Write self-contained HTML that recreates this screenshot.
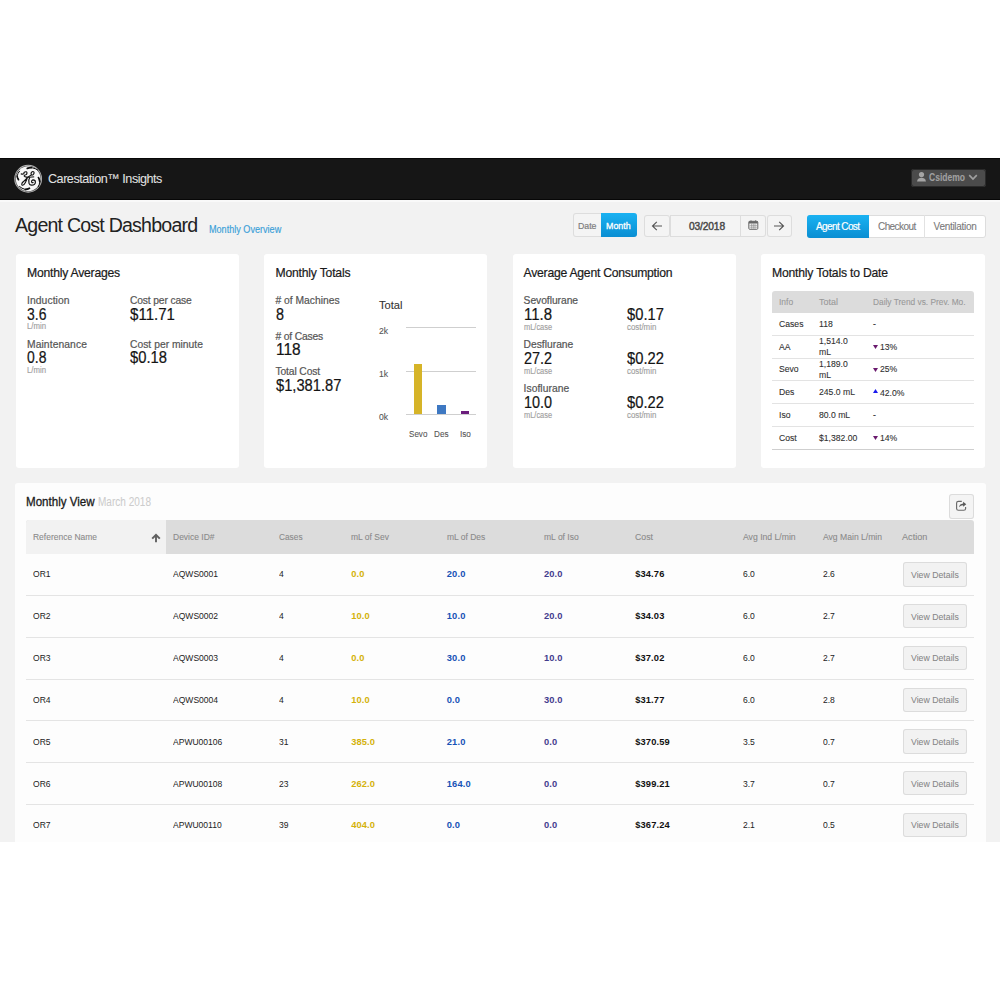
<!DOCTYPE html>
<html><head><meta charset="utf-8"><style>
html,body{margin:0;padding:0;}
body{width:1000px;height:1000px;position:relative;overflow:hidden;background:#ffffff;font-family:"Liberation Sans",sans-serif;}
.a{position:absolute;}
.t{position:absolute;white-space:nowrap;transform-origin:0 0;}
</style></head><body>
<div class="a" style="left:0.00px;top:158.00px;width:1000.00px;height:42.00px;background:#161616;"></div>
<div class="a" style="left:0.00px;top:158.00px;width:1000.00px;height:1.00px;background:#080808;"></div>
<div class="a" style="left:0.00px;top:199.00px;width:1000.00px;height:1.00px;background:#070707;"></div>
<div class="a" style="left:0.00px;top:200.00px;width:1000.00px;height:642.00px;background:#f2f2f2;"></div>
<div class="a" style="left:0.00px;top:200.00px;width:1000.00px;height:2.00px;background:#f9f9f9;"></div>
<svg class="a" style="left:12px;top:163px;width:34px;height:32px" viewBox="0 0 34 32">
<circle cx="16.15" cy="15.75" r="13.9" fill="#b8b8b8"/>
<circle cx="16.15" cy="15.75" r="13.0" fill="#4a4a4a"/>
<circle cx="16.15" cy="15.75" r="12.4" fill="#f8f8f8"/>
<g stroke="#111" fill="none" stroke-linecap="round">
<path d="M15.3 5.4 Q20.4 3.4 25.9 7.1" stroke-width="1.0"/>
<path d="M15.3 5.4 Q17.5 4.6 19.5 4.5" stroke-width="1.7"/>
<path d="M26.5 14.6 Q29.2 19 26.2 23.8" stroke-width="1.0"/>
<path d="M26.5 14.6 Q27.6 16.6 27.7 18.5" stroke-width="1.7"/>
<path d="M17.5 25.3 Q12.9 28.2 7.5 23.5" stroke-width="1.0"/>
<path d="M17.5 25.3 Q15.4 26.5 13.3 26.6" stroke-width="1.7"/>
<path d="M6.5 16.7 Q3.4 12.9 7.5 8.2" stroke-width="1.0"/>
<path d="M6.5 16.7 Q5.3 14.9 5.1 13" stroke-width="1.7"/>
<path d="M9.2 10.9 C10.5 11.4 11.3 11.2 11.9 10.6 C11.5 9.4 12.6 8.6 14.3 8.8 C15.4 9.3 15.1 11.3 13.8 11.7 C12.6 12 11.8 12.6 12.4 13.4 C13 14.1 14.3 14.1 15.3 14.3" stroke-width="1.15"/>
<path d="M15.3 14.5 C14.6 16 12.6 17.6 11 19 C9.6 20.3 9.4 22 10.3 22.2 C11.5 22.5 12.6 21.2 13.4 19.6 C14.2 18 14.8 16.8 15.3 14.6" stroke-width="1.15"/>
<path d="M15.3 14.6 L19.4 11.9 C18.6 10.6 19.2 8.7 20.9 8.5 C22.5 8.5 22.5 10.6 21 11.7 C20.4 12.1 19.8 12.2 19.4 11.9" stroke-width="1.15"/>
<path d="M15.8 14.3 L21.8 13.9" stroke-width="1.0"/>
<path d="M17.7 14.6 C16.8 15.8 16.6 18.4 17 20.2 C17.5 21.6 18.6 22.2 19.8 22.1 C21.6 22 23.3 20.8 23.4 19.2 C23.4 17.8 22.4 16.9 21.2 16.9 C20 17 19.4 17.9 19.6 18.8 C19.8 19.6 20.6 19.9 21.1 19.6" stroke-width="1.15"/>
</g></svg>
<div class="t" style="left:48.00px;top:171px;font-size:12.6px;line-height:16px;color:#e2e2e2;letter-spacing:-0.474px;-webkit-text-stroke-width:0.05px;">Carestation™ Insights</div>
<div class="a" style="left:911.00px;top:168.50px;width:74.50px;height:18.50px;background:#4b4b4b;border-radius:3px;box-shadow:inset 0 0 0 1px #2a2a2a;"></div>
<svg class="a" style="left:916px;top:171px;width:12px;height:12px" viewBox="0 0 12 12">
<circle cx="5.5" cy="3.6" r="2.6" fill="#a5a5a5"/><path d="M1 10.5 C1.5 7.5 3.5 6.8 5.5 6.8 C7.5 6.8 9.5 7.5 10 10.5 Z" fill="#a5a5a5"/></svg>
<div class="t" style="left:929.00px;top:172px;font-size:10px;line-height:12px;color:#a0a0a0;font-weight:700;transform:scaleX(0.8524);-webkit-text-stroke-width:0.1px;">Csidemo</div>
<svg class="a" style="left:968px;top:173px;width:10px;height:8px" viewBox="0 0 10 8">
<path d="M1.2 2.2 L5 6 L8.8 2.2" stroke="#a0a0a0" stroke-width="1.7" fill="none"/></svg>
<div class="t" style="left:15.00px;top:213px;font-size:19.6px;line-height:24px;color:#222222;letter-spacing:-0.795px;">Agent Cost Dashboard</div>
<div class="t" style="left:208.80px;top:224px;font-size:10px;line-height:12px;color:#3a9fd8;transform:scaleX(0.9085);-webkit-text-stroke-width:0.15px;">Monthly Overview</div>
<div class="a" style="left:572.75px;top:213.30px;width:64.05px;height:24.20px;background:#f4f4f4;border-radius:3px;box-shadow:inset 0 0 0 1px #dddddd;"></div>
<div class="a" style="left:600.80px;top:213.30px;width:36.00px;height:24.20px;background:linear-gradient(#1ab2f2,#0a8ed2);border-radius:0 3px 3px 0;"></div>
<div class="t" style="left:577.70px;top:220px;font-size:9.8px;line-height:12px;color:#7c7c7c;transform:scaleX(0.8937);-webkit-text-stroke-width:0.2px;">Date</div>
<div class="t" style="left:606.30px;top:220px;font-size:9.8px;line-height:12px;color:#ffffff;transform:scaleX(0.9068);-webkit-text-stroke-width:0.3px;">Month</div>
<div class="a" style="left:644.30px;top:215.30px;width:25.70px;height:22.00px;background:#f4f4f4;border-radius:3px;box-shadow:inset 0 0 0 1px #dddddd;"></div>
<svg class="a" style="left:651px;top:220px;width:12px;height:12px" viewBox="0 0 12 12">
<path d="M11 6 H1.5 M5.8 1.8 L1.5 6 L5.8 10.2" stroke="#555" stroke-width="1.15" fill="none"/></svg>
<div class="a" style="left:670.00px;top:215.30px;width:70.50px;height:22.00px;background:#f4f4f4;box-shadow:inset 0 0 0 1px #dddddd;"></div>
<div class="t" style="left:688.90px;top:220px;font-size:10.2px;line-height:13px;color:#4a4a4a;letter-spacing:-0.110px;-webkit-text-stroke-width:0.45px;">03/2018</div>
<div class="a" style="left:740.00px;top:215.30px;width:25.50px;height:22.00px;background:#f4f4f4;border-radius:0 3px 3px 0;box-shadow:inset 0 0 0 1px #dddddd;"></div>
<svg class="a" style="left:748px;top:219.5px;width:11px;height:10px" viewBox="0 0 11 10">
<rect x="0.8" y="1.3" width="9" height="8" rx="1" fill="none" stroke="#666" stroke-width="1"/><rect x="0.8" y="1.3" width="9" height="2.2" fill="#666"/>
<path d="M3 0.3 V2 M7.6 0.3 V2" stroke="#666" stroke-width="0.9"/>
<path d="M1.5 5.4 H9 M1.5 7.2 H9 M3.6 3.5 V8.8 M5.3 3.5 V8.8 M7 3.5 V8.8" stroke="#888" stroke-width="0.6"/></svg>
<div class="a" style="left:767.00px;top:215.30px;width:24.60px;height:22.00px;background:#f4f4f4;border-radius:3px;box-shadow:inset 0 0 0 1px #dddddd;"></div>
<svg class="a" style="left:773px;top:220px;width:12px;height:12px" viewBox="0 0 12 12">
<path d="M1 6 H10.5 M6.2 1.8 L10.5 6 L6.2 10.2" stroke="#555" stroke-width="1.15" fill="none"/></svg>
<div class="a" style="left:806.60px;top:215.00px;width:179.40px;height:23.00px;background:#ffffff;border-radius:3px;box-shadow:inset 0 0 0 1px #dddddd;"></div>
<div class="a" style="left:806.60px;top:215.00px;width:62.00px;height:23.00px;background:linear-gradient(#1ab2f2,#0a8ed2);border-radius:3px 0 0 3px;"></div>
<div class="a" style="left:924.00px;top:215.00px;width:1.00px;height:23.00px;background:#e2e2e2;"></div>
<div class="t" style="left:816.00px;top:221px;font-size:10px;line-height:12px;color:#ffffff;letter-spacing:-0.607px;-webkit-text-stroke-width:0.2px;">Agent Cost</div>
<div class="t" style="left:878.00px;top:221px;font-size:10px;line-height:12px;color:#7a7a7a;letter-spacing:-0.581px;-webkit-text-stroke-width:0.1px;">Checkout</div>
<div class="t" style="left:933.60px;top:221px;font-size:10px;line-height:12px;color:#7a7a7a;letter-spacing:-0.304px;-webkit-text-stroke-width:0.1px;">Ventilation</div>
<div class="a" style="left:15.60px;top:253.80px;width:223.40px;height:214.20px;background:#ffffff;border-radius:3px;"></div>
<div class="a" style="left:263.75px;top:253.80px;width:223.25px;height:214.20px;background:#ffffff;border-radius:3px;"></div>
<div class="a" style="left:512.50px;top:253.80px;width:223.50px;height:214.20px;background:#ffffff;border-radius:3px;"></div>
<div class="a" style="left:761.00px;top:253.80px;width:223.50px;height:214.20px;background:#ffffff;border-radius:3px;"></div>
<div class="t" style="left:27.00px;top:266px;font-size:12.2px;line-height:15px;color:#1a1a1a;letter-spacing:-0.235px;-webkit-text-stroke-width:0.2px;">Monthly Averages</div>
<div class="t" style="left:27.00px;top:294px;font-size:10.3px;line-height:13px;color:#555555;letter-spacing:0.088px;-webkit-text-stroke-width:0.2px;">Induction</div>
<div class="t" style="left:27.00px;top:304px;font-size:16.3px;line-height:20px;color:#141414;transform:scaleX(0.8562);-webkit-text-stroke-width:0.2px;">3.6</div>
<div class="t" style="left:27.00px;top:321px;font-size:8.3px;line-height:10px;color:#a0a0a0;transform:scaleX(0.9361);-webkit-text-stroke-width:0.15px;">L/min</div>
<div class="t" style="left:27.00px;top:338px;font-size:10.3px;line-height:13px;color:#555555;letter-spacing:0.093px;-webkit-text-stroke-width:0.2px;">Maintenance</div>
<div class="t" style="left:27.00px;top:347px;font-size:16.3px;line-height:20px;color:#141414;transform:scaleX(0.8562);-webkit-text-stroke-width:0.2px;">0.8</div>
<div class="t" style="left:27.00px;top:365px;font-size:8.3px;line-height:10px;color:#a0a0a0;transform:scaleX(0.9361);-webkit-text-stroke-width:0.15px;">L/min</div>
<div class="t" style="left:130.00px;top:294px;font-size:10.3px;line-height:13px;color:#555555;letter-spacing:-0.150px;-webkit-text-stroke-width:0.2px;">Cost per case</div>
<div class="t" style="left:130.00px;top:304px;font-size:16.3px;line-height:20px;color:#141414;transform:scaleX(0.9250);-webkit-text-stroke-width:0.2px;">$11.71</div>
<div class="t" style="left:130.00px;top:338px;font-size:10.3px;line-height:13px;color:#555555;letter-spacing:0.020px;-webkit-text-stroke-width:0.2px;">Cost per minute</div>
<div class="t" style="left:130.00px;top:347px;font-size:16.3px;line-height:20px;color:#141414;transform:scaleX(0.9071);-webkit-text-stroke-width:0.2px;">$0.18</div>
<div class="t" style="left:275.50px;top:266px;font-size:12.2px;line-height:15px;color:#1a1a1a;letter-spacing:-0.204px;-webkit-text-stroke-width:0.2px;">Monthly Totals</div>
<div class="t" style="left:275.50px;top:294px;font-size:10.3px;line-height:13px;color:#555555;-webkit-text-stroke-width:0.2px;"># of Machines</div>
<div class="t" style="left:275.50px;top:304px;font-size:16.3px;line-height:20px;color:#141414;transform:scaleX(0.8825);-webkit-text-stroke-width:0.2px;">8</div>
<div class="t" style="left:275.50px;top:330px;font-size:10.3px;line-height:13px;color:#555555;letter-spacing:-0.174px;-webkit-text-stroke-width:0.2px;"># of Cases</div>
<div class="t" style="left:275.50px;top:339px;font-size:16.3px;line-height:20px;color:#141414;transform:scaleX(0.9505);-webkit-text-stroke-width:0.2px;">118</div>
<div class="t" style="left:275.50px;top:365px;font-size:10.3px;line-height:13px;color:#555555;letter-spacing:-0.130px;-webkit-text-stroke-width:0.2px;">Total Cost</div>
<div class="t" style="left:275.50px;top:375px;font-size:16.3px;line-height:20px;color:#141414;transform:scaleX(0.9033);-webkit-text-stroke-width:0.2px;">$1,381.87</div>
<div class="t" style="left:378.90px;top:298px;font-size:11.5px;line-height:14px;color:#333333;transform:scaleX(0.9674);-webkit-text-stroke-width:0.1px;">Total</div>
<div class="a" style="left:406.40px;top:326.80px;width:69.90px;height:1.00px;background:#cfcfcf;"></div>
<div class="a" style="left:406.40px;top:370.60px;width:69.90px;height:1.00px;background:#cfcfcf;"></div>
<div class="a" style="left:406.40px;top:413.70px;width:69.90px;height:1.00px;background:#cfcfcf;"></div>
<div class="t" style="left:378.90px;top:326px;font-size:8.7px;line-height:11px;color:#555555;transform:scaleX(0.9903);-webkit-text-stroke-width:0.1px;">2k</div>
<div class="t" style="left:378.90px;top:369px;font-size:8.7px;line-height:11px;color:#555555;transform:scaleX(0.9903);-webkit-text-stroke-width:0.1px;">1k</div>
<div class="t" style="left:378.90px;top:412px;font-size:8.7px;line-height:11px;color:#555555;transform:scaleX(0.9903);-webkit-text-stroke-width:0.1px;">0k</div>
<div class="a" style="left:413.80px;top:363.60px;width:8.60px;height:50.40px;background:#d6b428;"></div>
<div class="a" style="left:437.30px;top:404.60px;width:8.60px;height:9.40px;background:#3e78c2;"></div>
<div class="a" style="left:460.80px;top:411.10px;width:8.50px;height:2.90px;background:#6b1d7c;"></div>
<div class="t" style="left:408.80px;top:428px;font-size:9.6px;line-height:12px;color:#555555;transform:scaleX(0.8409);-webkit-text-stroke-width:0.1px;">Sevo</div>
<div class="t" style="left:434.00px;top:428px;font-size:9.6px;line-height:12px;color:#555555;transform:scaleX(0.8493);-webkit-text-stroke-width:0.1px;">Des</div>
<div class="t" style="left:459.50px;top:428px;font-size:9.6px;line-height:12px;color:#555555;transform:scaleX(0.8511);-webkit-text-stroke-width:0.1px;">Iso</div>
<div class="t" style="left:523.60px;top:266px;font-size:12.2px;line-height:15px;color:#1a1a1a;letter-spacing:-0.252px;-webkit-text-stroke-width:0.2px;">Average Agent Consumption</div>
<div class="t" style="left:523.60px;top:294px;font-size:10.3px;line-height:13px;color:#555555;letter-spacing:-0.052px;-webkit-text-stroke-width:0.2px;">Sevoflurane</div>
<div class="t" style="left:523.60px;top:304px;font-size:16.3px;line-height:20px;color:#141414;transform:scaleX(0.9208);-webkit-text-stroke-width:0.2px;">11.8</div>
<div class="t" style="left:523.60px;top:322px;font-size:8.3px;line-height:10px;color:#a0a0a0;transform:scaleX(0.8958);-webkit-text-stroke-width:0.15px;">mL/case</div>
<div class="t" style="left:627.00px;top:304px;font-size:16.3px;line-height:20px;color:#141414;transform:scaleX(0.9046);-webkit-text-stroke-width:0.2px;">$0.17</div>
<div class="t" style="left:627.00px;top:322px;font-size:8.3px;line-height:10px;color:#a0a0a0;transform:scaleX(0.9481);-webkit-text-stroke-width:0.15px;">cost/min</div>
<div class="t" style="left:523.60px;top:338px;font-size:10.3px;line-height:13px;color:#555555;letter-spacing:-0.011px;-webkit-text-stroke-width:0.2px;">Desflurane</div>
<div class="t" style="left:523.60px;top:348px;font-size:16.3px;line-height:20px;color:#141414;transform:scaleX(0.8857);-webkit-text-stroke-width:0.2px;">27.2</div>
<div class="t" style="left:523.60px;top:366px;font-size:8.3px;line-height:10px;color:#a0a0a0;transform:scaleX(0.8958);-webkit-text-stroke-width:0.15px;">mL/case</div>
<div class="t" style="left:627.00px;top:348px;font-size:16.3px;line-height:20px;color:#141414;transform:scaleX(0.9046);-webkit-text-stroke-width:0.2px;">$0.22</div>
<div class="t" style="left:627.00px;top:366px;font-size:8.3px;line-height:10px;color:#a0a0a0;transform:scaleX(0.9481);-webkit-text-stroke-width:0.15px;">cost/min</div>
<div class="t" style="left:523.60px;top:382px;font-size:10.3px;line-height:13px;color:#555555;letter-spacing:0.037px;-webkit-text-stroke-width:0.2px;">Isoflurane</div>
<div class="t" style="left:523.60px;top:392px;font-size:16.3px;line-height:20px;color:#141414;transform:scaleX(0.8857);-webkit-text-stroke-width:0.2px;">10.0</div>
<div class="t" style="left:523.60px;top:410px;font-size:8.3px;line-height:10px;color:#a0a0a0;transform:scaleX(0.8958);-webkit-text-stroke-width:0.15px;">mL/case</div>
<div class="t" style="left:627.00px;top:392px;font-size:16.3px;line-height:20px;color:#141414;transform:scaleX(0.9046);-webkit-text-stroke-width:0.2px;">$0.22</div>
<div class="t" style="left:627.00px;top:410px;font-size:8.3px;line-height:10px;color:#a0a0a0;transform:scaleX(0.9481);-webkit-text-stroke-width:0.15px;">cost/min</div>
<div class="t" style="left:772.00px;top:266px;font-size:12.2px;line-height:15px;color:#1a1a1a;letter-spacing:-0.204px;-webkit-text-stroke-width:0.2px;">Monthly Totals to Date</div>
<div class="a" style="left:772.00px;top:291.00px;width:202.00px;height:21.70px;background:#dcdcdc;border-radius:3px 3px 0 0;"></div>
<div class="t" style="left:778.90px;top:296px;font-size:9.6px;line-height:12px;color:#999999;transform:scaleX(0.8806);-webkit-text-stroke-width:0.1px;">Info</div>
<div class="t" style="left:819.10px;top:296px;font-size:9.6px;line-height:12px;color:#999999;transform:scaleX(0.9320);-webkit-text-stroke-width:0.1px;">Total</div>
<div class="t" style="left:873.20px;top:296px;font-size:9.6px;line-height:12px;color:#999999;transform:scaleX(0.8693);-webkit-text-stroke-width:0.1px;">Daily Trend vs. Prev. Mo.</div>
<div class="a" style="left:772.00px;top:335.00px;width:202.00px;height:1.00px;background:#e3e3e3;"></div>
<div class="a" style="left:772.00px;top:358.00px;width:202.00px;height:1.00px;background:#e3e3e3;"></div>
<div class="a" style="left:772.00px;top:380.00px;width:202.00px;height:1.00px;background:#e3e3e3;"></div>
<div class="a" style="left:772.00px;top:403.00px;width:202.00px;height:1.00px;background:#e3e3e3;"></div>
<div class="a" style="left:772.00px;top:426.00px;width:202.00px;height:1.00px;background:#e3e3e3;"></div>
<div class="a" style="left:772.00px;top:449.00px;width:202.00px;height:1.00px;background:#cfcfcf;"></div>
<div class="t" style="left:778.90px;top:318px;font-size:9.4px;line-height:12px;color:#303030;transform:scaleX(0.9200);-webkit-text-stroke-width:0.1px;">Cases</div>
<div class="t" style="left:819.10px;top:318px;font-size:9.4px;line-height:12px;color:#303030;transform:scaleX(0.9200);-webkit-text-stroke-width:0.1px;">118</div>
<div class="t" style="left:873.20px;top:318px;font-size:9.4px;line-height:12px;color:#303030;transform:scaleX(0.9200);-webkit-text-stroke-width:0.1px;">-</div>
<div class="t" style="left:778.90px;top:341px;font-size:9.4px;line-height:12px;color:#303030;transform:scaleX(0.9200);-webkit-text-stroke-width:0.1px;">AA</div>
<div class="t" style="left:819.10px;top:335px;font-size:9.4px;line-height:12px;color:#303030;transform:scaleX(0.9200);-webkit-text-stroke-width:0.1px;">1,514.0</div>
<div class="t" style="left:819.10px;top:346px;font-size:9.4px;line-height:12px;color:#303030;transform:scaleX(0.9200);-webkit-text-stroke-width:0.1px;">mL</div>
<svg class="a" style="left:873px;top:345.00px;width:5px;height:4px" viewBox="0 0 5 4"><path d="M0 0 H5 L2.5 4Z" fill="#6a1a6e"/></svg>
<div class="t" style="left:879.60px;top:341px;font-size:9.4px;line-height:12px;color:#303030;transform:scaleX(0.9200);-webkit-text-stroke-width:0.1px;">13%</div>
<div class="t" style="left:778.90px;top:363px;font-size:9.4px;line-height:12px;color:#303030;transform:scaleX(0.9200);-webkit-text-stroke-width:0.1px;">Sevo</div>
<div class="t" style="left:819.10px;top:358px;font-size:9.4px;line-height:12px;color:#303030;transform:scaleX(0.9200);-webkit-text-stroke-width:0.1px;">1,189.0</div>
<div class="t" style="left:819.10px;top:369px;font-size:9.4px;line-height:12px;color:#303030;transform:scaleX(0.9200);-webkit-text-stroke-width:0.1px;">mL</div>
<svg class="a" style="left:873px;top:367.50px;width:5px;height:4px" viewBox="0 0 5 4"><path d="M0 0 H5 L2.5 4Z" fill="#6a1a6e"/></svg>
<div class="t" style="left:879.60px;top:363px;font-size:9.4px;line-height:12px;color:#303030;transform:scaleX(0.9200);-webkit-text-stroke-width:0.1px;">25%</div>
<div class="t" style="left:778.90px;top:386px;font-size:9.4px;line-height:12px;color:#303030;transform:scaleX(0.9200);-webkit-text-stroke-width:0.1px;">Des</div>
<div class="t" style="left:819.10px;top:386px;font-size:9.4px;line-height:12px;color:#303030;transform:scaleX(0.9200);-webkit-text-stroke-width:0.1px;">245.0 mL</div>
<svg class="a" style="left:873px;top:389.00px;width:5px;height:4px" viewBox="0 0 5 4"><path d="M0 4 H5 L2.5 0Z" fill="#1a1aee"/></svg>
<div class="t" style="left:880.30px;top:387px;font-size:9.4px;line-height:12px;color:#303030;transform:scaleX(0.9200);-webkit-text-stroke-width:0.1px;">42.0%</div>
<div class="t" style="left:778.90px;top:409px;font-size:9.4px;line-height:12px;color:#303030;transform:scaleX(0.9200);-webkit-text-stroke-width:0.1px;">Iso</div>
<div class="t" style="left:819.10px;top:409px;font-size:9.4px;line-height:12px;color:#303030;transform:scaleX(0.9200);-webkit-text-stroke-width:0.1px;">80.0 mL</div>
<div class="t" style="left:873.20px;top:409px;font-size:9.4px;line-height:12px;color:#303030;transform:scaleX(0.9200);-webkit-text-stroke-width:0.1px;">-</div>
<div class="t" style="left:778.90px;top:432px;font-size:9.4px;line-height:12px;color:#303030;transform:scaleX(0.9200);-webkit-text-stroke-width:0.1px;">Cost</div>
<div class="t" style="left:819.10px;top:432px;font-size:9.4px;line-height:12px;color:#303030;transform:scaleX(0.9200);-webkit-text-stroke-width:0.1px;">$1,382.00</div>
<svg class="a" style="left:873px;top:436.00px;width:5px;height:4px" viewBox="0 0 5 4"><path d="M0 0 H5 L2.5 4Z" fill="#6a1a6e"/></svg>
<div class="t" style="left:879.60px;top:432px;font-size:9.4px;line-height:12px;color:#303030;transform:scaleX(0.9200);-webkit-text-stroke-width:0.1px;">14%</div>
<div class="a" style="left:15.00px;top:483.00px;width:970.50px;height:359.00px;background:#fdfdfd;border-radius:3px 3px 0 0;"></div>
<div class="t" style="left:26.40px;top:495px;font-size:12.5px;line-height:15px;color:#1a1a1a;transform:scaleX(0.9256);-webkit-text-stroke-width:0.3px;">Monthly View</div>
<div class="t" style="left:98.00px;top:495px;font-size:12.5px;line-height:15px;color:#cccccc;transform:scaleX(0.8029);-webkit-text-stroke-width:0.05px;">March 2018</div>
<div class="a" style="left:948.60px;top:494.00px;width:25.90px;height:24.60px;background:#f4f4f4;border-radius:3px;box-shadow:inset 0 0 0 1px #dcdcdc;"></div>
<svg class="a" style="left:955px;top:500px;width:12px;height:12px" viewBox="0 0 12 12">
<path d="M6.8 1.3 H3.4 Q1.6 1.3 1.6 3.1 V8.4 Q1.6 10.2 3.4 10.2 H8.8 Q10.6 10.2 10.6 8.4 V7" stroke="#6a6a6a" stroke-width="1.15" fill="none"/>
<path d="M4 7.2 Q4.6 3.9 8.1 3.5 V1.8 L11.3 4.3 L8.1 6.8 V5.2 Q5.6 5.2 4 7.2 Z" fill="#5a5a5a"/></svg>
<div class="a" style="left:26.00px;top:520.00px;width:948.30px;height:33.50px;background:#dcdcdc;border-radius:3px 3px 0 0;"></div>
<div class="a" style="left:26.00px;top:520.00px;width:140.00px;height:33.50px;background:#f2f2f2;border-radius:3px 0 0 0;"></div>
<div class="t" style="left:33.40px;top:531px;font-size:9.9px;line-height:12px;color:#8a8a8a;transform:scaleX(0.8579);-webkit-text-stroke-width:0.1px;">Reference Name</div>
<div class="t" style="left:173.20px;top:531px;font-size:9.9px;line-height:12px;color:#8a8a8a;transform:scaleX(0.8592);-webkit-text-stroke-width:0.1px;">Device ID#</div>
<div class="t" style="left:279.20px;top:531px;font-size:9.9px;line-height:12px;color:#8a8a8a;transform:scaleX(0.8410);-webkit-text-stroke-width:0.1px;">Cases</div>
<div class="t" style="left:351.20px;top:531px;font-size:9.9px;line-height:12px;color:#8a8a8a;transform:scaleX(0.8597);-webkit-text-stroke-width:0.1px;">mL of Sev</div>
<div class="t" style="left:446.80px;top:531px;font-size:9.9px;line-height:12px;color:#8a8a8a;transform:scaleX(0.8581);-webkit-text-stroke-width:0.1px;">mL of Des</div>
<div class="t" style="left:544.00px;top:531px;font-size:9.9px;line-height:12px;color:#8a8a8a;transform:scaleX(0.8625);-webkit-text-stroke-width:0.1px;">mL of Iso</div>
<div class="t" style="left:635.20px;top:531px;font-size:9.9px;line-height:12px;color:#8a8a8a;transform:scaleX(0.8843);-webkit-text-stroke-width:0.1px;">Cost</div>
<div class="t" style="left:743.20px;top:531px;font-size:9.9px;line-height:12px;color:#8a8a8a;transform:scaleX(0.8748);-webkit-text-stroke-width:0.1px;">Avg Ind L/min</div>
<div class="t" style="left:822.80px;top:531px;font-size:9.9px;line-height:12px;color:#8a8a8a;transform:scaleX(0.8699);-webkit-text-stroke-width:0.1px;">Avg Main L/min</div>
<div class="t" style="left:902.40px;top:531px;font-size:9.9px;line-height:12px;color:#8a8a8a;transform:scaleX(0.9231);-webkit-text-stroke-width:0.1px;">Action</div>
<svg class="a" style="left:151px;top:532.5px;width:10px;height:10px" viewBox="0 0 10 10">
<path d="M5 9.3 V3" stroke="#606060" stroke-width="1.9" fill="none"/><path d="M1.2 5.6 L5 1.8 L8.8 5.6" stroke="#606060" stroke-width="2" fill="none"/></svg>
<div class="a" style="left:26.00px;top:595.00px;width:948.20px;height:1.00px;background:#e4e4e4;"></div>
<div class="t" style="left:33.40px;top:568px;font-size:9.4px;line-height:12px;color:#222222;transform:scaleX(0.9100);">OR1</div>
<div class="t" style="left:173.20px;top:568px;font-size:9.4px;line-height:12px;color:#222222;transform:scaleX(0.9100);">AQWS0001</div>
<div class="t" style="left:279.20px;top:568px;font-size:9.4px;line-height:12px;color:#222222;transform:scaleX(0.9100);">4</div>
<div class="t" style="left:351.20px;top:568px;font-size:9.3px;line-height:12px;color:#d4b20a;font-weight:700;letter-spacing:0.129px;">0.0</div>
<div class="t" style="left:446.80px;top:568px;font-size:9.3px;line-height:12px;color:#1752b6;font-weight:700;letter-spacing:0.136px;">20.0</div>
<div class="t" style="left:544.00px;top:568px;font-size:9.3px;line-height:12px;color:#443c8e;font-weight:700;letter-spacing:0.136px;">20.0</div>
<div class="t" style="left:635.20px;top:568px;font-size:9.3px;line-height:12px;color:#111111;font-weight:700;letter-spacing:0.142px;">$34.76</div>
<div class="t" style="left:743.20px;top:568px;font-size:9.4px;line-height:12px;color:#222222;transform:scaleX(0.9100);">6.0</div>
<div class="t" style="left:822.80px;top:568px;font-size:9.4px;line-height:12px;color:#222222;transform:scaleX(0.9100);">2.6</div>
<div class="a" style="left:903.20px;top:562.40px;width:63.50px;height:24.20px;background:#f2f2f2;border-radius:3px;box-shadow:inset 0 0 0 1px #dcdcdc;"></div>
<div class="t" style="left:911.00px;top:569px;font-size:9.9px;line-height:12px;color:#858585;transform:scaleX(0.8841);-webkit-text-stroke-width:0.05px;">View Details</div>
<div class="a" style="left:26.00px;top:637.00px;width:948.20px;height:1.00px;background:#e4e4e4;"></div>
<div class="t" style="left:33.40px;top:610px;font-size:9.4px;line-height:12px;color:#222222;transform:scaleX(0.9100);">OR2</div>
<div class="t" style="left:173.20px;top:610px;font-size:9.4px;line-height:12px;color:#222222;transform:scaleX(0.9100);">AQWS0002</div>
<div class="t" style="left:279.20px;top:610px;font-size:9.4px;line-height:12px;color:#222222;transform:scaleX(0.9100);">4</div>
<div class="t" style="left:351.20px;top:610px;font-size:9.3px;line-height:12px;color:#d4b20a;font-weight:700;letter-spacing:0.136px;">10.0</div>
<div class="t" style="left:446.80px;top:610px;font-size:9.3px;line-height:12px;color:#1752b6;font-weight:700;letter-spacing:0.136px;">10.0</div>
<div class="t" style="left:544.00px;top:610px;font-size:9.3px;line-height:12px;color:#443c8e;font-weight:700;letter-spacing:0.136px;">20.0</div>
<div class="t" style="left:635.20px;top:610px;font-size:9.3px;line-height:12px;color:#111111;font-weight:700;letter-spacing:0.142px;">$34.03</div>
<div class="t" style="left:743.20px;top:610px;font-size:9.4px;line-height:12px;color:#222222;transform:scaleX(0.9100);">6.0</div>
<div class="t" style="left:822.80px;top:610px;font-size:9.4px;line-height:12px;color:#222222;transform:scaleX(0.9100);">2.7</div>
<div class="a" style="left:903.20px;top:604.15px;width:63.50px;height:24.20px;background:#f2f2f2;border-radius:3px;box-shadow:inset 0 0 0 1px #dcdcdc;"></div>
<div class="t" style="left:911.00px;top:611px;font-size:9.9px;line-height:12px;color:#858585;transform:scaleX(0.8841);-webkit-text-stroke-width:0.05px;">View Details</div>
<div class="a" style="left:26.00px;top:679.00px;width:948.20px;height:1.00px;background:#e4e4e4;"></div>
<div class="t" style="left:33.40px;top:652px;font-size:9.4px;line-height:12px;color:#222222;transform:scaleX(0.9100);">OR3</div>
<div class="t" style="left:173.20px;top:652px;font-size:9.4px;line-height:12px;color:#222222;transform:scaleX(0.9100);">AQWS0003</div>
<div class="t" style="left:279.20px;top:652px;font-size:9.4px;line-height:12px;color:#222222;transform:scaleX(0.9100);">4</div>
<div class="t" style="left:351.20px;top:652px;font-size:9.3px;line-height:12px;color:#d4b20a;font-weight:700;letter-spacing:0.129px;">0.0</div>
<div class="t" style="left:446.80px;top:652px;font-size:9.3px;line-height:12px;color:#1752b6;font-weight:700;letter-spacing:0.136px;">30.0</div>
<div class="t" style="left:544.00px;top:652px;font-size:9.3px;line-height:12px;color:#443c8e;font-weight:700;letter-spacing:0.136px;">10.0</div>
<div class="t" style="left:635.20px;top:652px;font-size:9.3px;line-height:12px;color:#111111;font-weight:700;letter-spacing:0.142px;">$37.02</div>
<div class="t" style="left:743.20px;top:652px;font-size:9.4px;line-height:12px;color:#222222;transform:scaleX(0.9100);">6.0</div>
<div class="t" style="left:822.80px;top:652px;font-size:9.4px;line-height:12px;color:#222222;transform:scaleX(0.9100);">2.7</div>
<div class="a" style="left:903.20px;top:645.90px;width:63.50px;height:24.20px;background:#f2f2f2;border-radius:3px;box-shadow:inset 0 0 0 1px #dcdcdc;"></div>
<div class="t" style="left:911.00px;top:652px;font-size:9.9px;line-height:12px;color:#858585;transform:scaleX(0.8841);-webkit-text-stroke-width:0.05px;">View Details</div>
<div class="a" style="left:26.00px;top:720.00px;width:948.20px;height:1.00px;background:#e4e4e4;"></div>
<div class="t" style="left:33.40px;top:694px;font-size:9.4px;line-height:12px;color:#222222;transform:scaleX(0.9100);">OR4</div>
<div class="t" style="left:173.20px;top:694px;font-size:9.4px;line-height:12px;color:#222222;transform:scaleX(0.9100);">AQWS0004</div>
<div class="t" style="left:279.20px;top:694px;font-size:9.4px;line-height:12px;color:#222222;transform:scaleX(0.9100);">4</div>
<div class="t" style="left:351.20px;top:694px;font-size:9.3px;line-height:12px;color:#d4b20a;font-weight:700;letter-spacing:0.136px;">10.0</div>
<div class="t" style="left:446.80px;top:694px;font-size:9.3px;line-height:12px;color:#1752b6;font-weight:700;letter-spacing:0.129px;">0.0</div>
<div class="t" style="left:544.00px;top:694px;font-size:9.3px;line-height:12px;color:#443c8e;font-weight:700;letter-spacing:0.136px;">30.0</div>
<div class="t" style="left:635.20px;top:694px;font-size:9.3px;line-height:12px;color:#111111;font-weight:700;letter-spacing:0.142px;">$31.77</div>
<div class="t" style="left:743.20px;top:694px;font-size:9.4px;line-height:12px;color:#222222;transform:scaleX(0.9100);">6.0</div>
<div class="t" style="left:822.80px;top:694px;font-size:9.4px;line-height:12px;color:#222222;transform:scaleX(0.9100);">2.8</div>
<div class="a" style="left:903.20px;top:687.65px;width:63.50px;height:24.20px;background:#f2f2f2;border-radius:3px;box-shadow:inset 0 0 0 1px #dcdcdc;"></div>
<div class="t" style="left:911.00px;top:694px;font-size:9.9px;line-height:12px;color:#858585;transform:scaleX(0.8841);-webkit-text-stroke-width:0.05px;">View Details</div>
<div class="a" style="left:26.00px;top:762.00px;width:948.20px;height:1.00px;background:#e4e4e4;"></div>
<div class="t" style="left:33.40px;top:736px;font-size:9.4px;line-height:12px;color:#222222;transform:scaleX(0.9100);">OR5</div>
<div class="t" style="left:173.20px;top:736px;font-size:9.4px;line-height:12px;color:#222222;transform:scaleX(0.9100);">APWU00106</div>
<div class="t" style="left:279.20px;top:736px;font-size:9.4px;line-height:12px;color:#222222;transform:scaleX(0.9100);">31</div>
<div class="t" style="left:351.20px;top:736px;font-size:9.3px;line-height:12px;color:#d4b20a;font-weight:700;letter-spacing:0.140px;">385.0</div>
<div class="t" style="left:446.80px;top:736px;font-size:9.3px;line-height:12px;color:#1752b6;font-weight:700;letter-spacing:0.136px;">21.0</div>
<div class="t" style="left:544.00px;top:736px;font-size:9.3px;line-height:12px;color:#443c8e;font-weight:700;letter-spacing:0.129px;">0.0</div>
<div class="t" style="left:635.20px;top:736px;font-size:9.3px;line-height:12px;color:#111111;font-weight:700;letter-spacing:0.144px;">$370.59</div>
<div class="t" style="left:743.20px;top:736px;font-size:9.4px;line-height:12px;color:#222222;transform:scaleX(0.9100);">3.5</div>
<div class="t" style="left:822.80px;top:736px;font-size:9.4px;line-height:12px;color:#222222;transform:scaleX(0.9100);">0.7</div>
<div class="a" style="left:903.20px;top:729.40px;width:63.50px;height:24.20px;background:#f2f2f2;border-radius:3px;box-shadow:inset 0 0 0 1px #dcdcdc;"></div>
<div class="t" style="left:911.00px;top:736px;font-size:9.9px;line-height:12px;color:#858585;transform:scaleX(0.8841);-webkit-text-stroke-width:0.05px;">View Details</div>
<div class="a" style="left:26.00px;top:804.00px;width:948.20px;height:1.00px;background:#e4e4e4;"></div>
<div class="t" style="left:33.40px;top:778px;font-size:9.4px;line-height:12px;color:#222222;transform:scaleX(0.9100);">OR6</div>
<div class="t" style="left:173.20px;top:778px;font-size:9.4px;line-height:12px;color:#222222;transform:scaleX(0.9100);">APWU00108</div>
<div class="t" style="left:279.20px;top:778px;font-size:9.4px;line-height:12px;color:#222222;transform:scaleX(0.9100);">23</div>
<div class="t" style="left:351.20px;top:778px;font-size:9.3px;line-height:12px;color:#d4b20a;font-weight:700;letter-spacing:0.140px;">262.0</div>
<div class="t" style="left:446.80px;top:778px;font-size:9.3px;line-height:12px;color:#1752b6;font-weight:700;letter-spacing:0.140px;">164.0</div>
<div class="t" style="left:544.00px;top:778px;font-size:9.3px;line-height:12px;color:#443c8e;font-weight:700;letter-spacing:0.129px;">0.0</div>
<div class="t" style="left:635.20px;top:778px;font-size:9.3px;line-height:12px;color:#111111;font-weight:700;letter-spacing:0.144px;">$399.21</div>
<div class="t" style="left:743.20px;top:778px;font-size:9.4px;line-height:12px;color:#222222;transform:scaleX(0.9100);">3.7</div>
<div class="t" style="left:822.80px;top:778px;font-size:9.4px;line-height:12px;color:#222222;transform:scaleX(0.9100);">0.7</div>
<div class="a" style="left:903.20px;top:771.15px;width:63.50px;height:24.20px;background:#f2f2f2;border-radius:3px;box-shadow:inset 0 0 0 1px #dcdcdc;"></div>
<div class="t" style="left:911.00px;top:778px;font-size:9.9px;line-height:12px;color:#858585;transform:scaleX(0.8841);-webkit-text-stroke-width:0.05px;">View Details</div>
<div class="t" style="left:33.40px;top:819px;font-size:9.4px;line-height:12px;color:#222222;transform:scaleX(0.9100);">OR7</div>
<div class="t" style="left:173.20px;top:819px;font-size:9.4px;line-height:12px;color:#222222;transform:scaleX(0.9100);">APWU00110</div>
<div class="t" style="left:279.20px;top:819px;font-size:9.4px;line-height:12px;color:#222222;transform:scaleX(0.9100);">39</div>
<div class="t" style="left:351.20px;top:819px;font-size:9.3px;line-height:12px;color:#d4b20a;font-weight:700;letter-spacing:0.140px;">404.0</div>
<div class="t" style="left:446.80px;top:819px;font-size:9.3px;line-height:12px;color:#1752b6;font-weight:700;letter-spacing:0.129px;">0.0</div>
<div class="t" style="left:544.00px;top:819px;font-size:9.3px;line-height:12px;color:#443c8e;font-weight:700;letter-spacing:0.129px;">0.0</div>
<div class="t" style="left:635.20px;top:819px;font-size:9.3px;line-height:12px;color:#111111;font-weight:700;letter-spacing:0.144px;">$367.24</div>
<div class="t" style="left:743.20px;top:819px;font-size:9.4px;line-height:12px;color:#222222;transform:scaleX(0.9100);">2.1</div>
<div class="t" style="left:822.80px;top:819px;font-size:9.4px;line-height:12px;color:#222222;transform:scaleX(0.9100);">0.5</div>
<div class="a" style="left:903.20px;top:812.90px;width:63.50px;height:24.20px;background:#f2f2f2;border-radius:3px;box-shadow:inset 0 0 0 1px #dcdcdc;"></div>
<div class="t" style="left:911.00px;top:819px;font-size:9.9px;line-height:12px;color:#858585;transform:scaleX(0.8841);-webkit-text-stroke-width:0.05px;">View Details</div>
</body></html>
